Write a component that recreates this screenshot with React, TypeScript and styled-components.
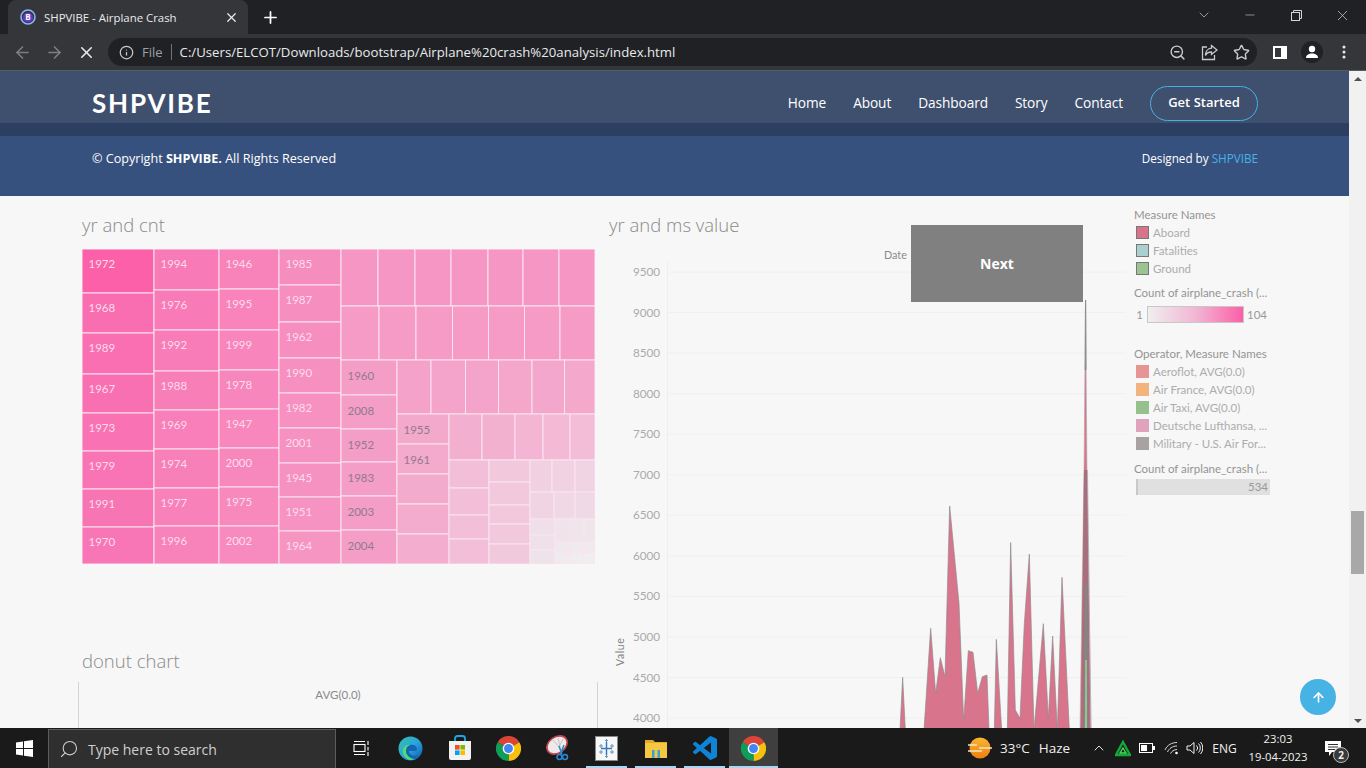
import React from 'react';
import styled, { createGlobalStyle } from 'styled-components';
import { ArrowLeft, ArrowRight, X, Info, ZoomOut, Star, Plus, ChevronDown, Minus, Search, ChevronUp, ArrowUp } from 'lucide-react';

const Global = createGlobalStyle`
  html, body { margin: 0; padding: 0; height: 100%; overflow: hidden; background: #f7f7f7; }
  #root { height: 100%; }
  * { box-sizing: border-box; }
`;

const UI = `"Open Sans", "Noto Sans", "Liberation Sans", sans-serif`;
const VIZ = `Lato, "Open Sans", "Liberation Sans", sans-serif`;

const Shell = styled.div`
  width: 1366px; height: 768px; display: flex; flex-direction: column; overflow: hidden; font-family: ${UI};
`;
const TabStrip = styled.div`
  height: 34px; background: #202124; display: flex; align-items: flex-end; padding-left: 8px; flex: none; color: #e8eaed;
`;
const Tab = styled.div`
  width: 240px; height: 34px; background: #35363a; border-radius: 8px 8px 0 0; display: flex; align-items: center; padding: 0 9px 0 12px; font-size: 11.4px; color: #e8eaed;
`;
const TabTitle = styled.span`
  margin-left: 8px; flex: 1; white-space: nowrap;
`;
const NewTab = styled.div`
  margin-left: 13px; height: 34px; display: flex; align-items: center;
`;
const WindowControls = styled.div`
  margin-left: auto; height: 30px; align-self: flex-start; display: flex; align-items: center; color: #d4d6d9;
`;
const WinBtn = styled.div<{ $w: number }>`
  width: ${p => p.$w}px; display: flex; justify-content: center;
`;
const Toolbar = styled.div`
  height: 36px; flex: none; background: #35363a; display: flex; align-items: center; padding-left: 6px; color: #c8cacd;
`;
const NavBtn = styled.div<{ $dim?: boolean }>`
  width: 32px; display: flex; justify-content: center; color: ${p => (p.$dim ? '#7d7f83' : '#e8eaed')};
`;
const Omnibox = styled.div`
  margin-left: 6px; width: 1149px; height: 28px; background: #202124; border-radius: 14px; display: flex; align-items: center; padding-left: 11px; font-size: 14px;
`;
const FileLabel = styled.span`
  color: #9aa0a6; font-size: 13px; margin-left: 8px;
`;
const Sep = styled.span`
  width: 1px; height: 16px; background: #70737a; margin: 0 8px;
`;
const Url = styled.span`
  color: #e8eaed; font-size: 13.2px; white-space: nowrap; flex: 1;
`;
const OmniIcon = styled.div`
  width: 32px; display: flex; justify-content: center; color: #c8cacd;
`;
const ToolRight = styled.div`
  display: flex; align-items: center; margin-left: 7px; color: #fff;
`;
const ToolSlot = styled.div`
  width: 32px; display: flex; justify-content: center;
`;
const Avatar = styled.div`
  width: 22px; height: 22px; border-radius: 50%; background: #202124; display: flex; align-items: center; justify-content: center;
`;
const Viewport = styled.div`
  flex: 1; min-height: 0; display: flex; border-top: 1px solid #5a5b5e; position: relative;
`;
const Page = styled.div`
  width: 1349px; background: #f7f7f7; display: flex; flex-direction: column; overflow: hidden;
`;
const Header = styled.header`
  height: 52px; flex: none; background: #3f4f6e; padding: 13px 91px 0 92px; display: flex; align-items: center; justify-content: space-between;
`;
const Logo = styled.div`
  font-family: Lato, "Open Sans", sans-serif; font-size: 26px; font-weight: 700; letter-spacing: 1.8px; color: #fff; padding-bottom: 2px;
`;
const Nav = styled.nav`
  display: flex; align-items: center; color: #fff; font-size: 13.7px; font-weight: 500;
`;
const NavLink = styled.span`
  margin-right: 27px; letter-spacing: -0.1px; padding-bottom: 2px;
`;
const CTA = styled.span`
  width: 108px; height: 35px; border: 1.5px solid #47b2e4; border-radius: 18px; display: flex; align-items: center; justify-content: center; font-size: 13px; font-weight: 600; color: #fff; padding-bottom: 3px;
`;
const Strip = styled.div`
  height: 13px; flex: none; background: #2c3e61;
`;
const Footer = styled.footer`
  height: 60px; flex: none; background: #37517e; padding: 14px 91px 0 92px; display: flex; justify-content: space-between; color: #fff; font-size: 12.6px;
  a { color: #47b2e4; }
`;
const Designed = styled.div`
  font-size: 11.7px;
`;
const Dashboard = styled.main`
  flex: 1; min-height: 0; display: flex; padding-left: 78px; align-items: flex-start;
`;
const LeftCol = styled.section`
  width: 520px; flex: none; padding-top: 17px;
`;
const RightCol = styled.section`
  width: 517px; flex: none; margin-left: 11px; padding-top: 17px; position: relative;
`;
const SheetTitle = styled.h2`
  margin: 0; font-family: ${UI}; font-weight: 300; font-size: 18.5px; line-height: 24px; height: 24px; color: #8a8a8a; white-space: nowrap;
`;
const LeftTitle = styled(SheetTitle)`
  padding-left: 4px;
`;
const TreeSvg = styled.svg`
  display: block; margin: 12px 0 0 4px;
`;
const DonutTitle = styled(LeftTitle)`
  margin-top: 85px;
`;
const DonutFrame = styled.div`
  margin-top: 9px; height: 60px; border-left: 1px solid #d4d4d4; border-right: 1px solid #d4d4d4; text-align: center; padding-top: 5px; font-family: ${VIZ}; font-size: 11.5px; color: #888; line-height: 16px;
`;
const ChartSvg = styled.svg`
  display: block; margin-top: 3px;
  text { font-family: ${VIZ}; }
`;
const NextButton = styled.div`
  position: absolute; left: 302px; top: 29px; width: 172px; height: 77px; background: #808080; color: #fff; font-family: ${UI}; font-weight: 700; font-size: 14px; display: flex; align-items: center; justify-content: center;
`;
const Legends = styled.aside`
  width: 136px; margin-left: 8px; padding-top: 12px; font-family: ${VIZ}; font-size: 11.5px; color: #949494; flex: none;
`;
const LegendTitle = styled.div<{ $mt?: number }>`
  height: 14px; line-height: 14px; margin-top: ${p => p.$mt ?? 0}px; margin-bottom: 1px; white-space: nowrap; overflow: hidden;
`;
const LegendRow = styled.div`
  height: 18px; display: flex; align-items: center; padding-left: 2px; color: #acacac; white-space: nowrap; overflow: hidden;
`;
const Swatch = styled.span<{ $c: string; $b?: boolean }>`
  width: 13px; height: 13px; margin-right: 4px; background: ${p => p.$c}; flex: none; border: ${p => (p.$b ? '1px solid #777' : 'none')};
`;
const ScaleRow = styled.div`
  display: flex; align-items: center; height: 17px; margin-top: 6px; color: #999;
`;
const ScaleMin = styled.span`
  width: 9px; text-align: right; margin-right: 4px;
`;
const ScaleBar = styled.span`
  width: 97px; height: 17px; margin: 0 3px 0 0; border: 1px solid #c8c8c8; background: linear-gradient(90deg, #f0eeee, #f2b6d4 50%, #fb5fa8);
`;
const SumBar = styled.div`
  margin-top: 3px; margin-left: 2px; width: 134px; height: 16px; background: #e0e0e0; border-left: 2px solid #c8c8c8; text-align: right; padding-right: 2px; color: #999; font-size: 11.5px; line-height: 16px;
`;
const Scrollbar = styled.div`
  width: 17px; flex: none; background: #f1f1f1; position: relative; display: flex; flex-direction: column; align-items: center; justify-content: space-between; padding: 6px 0 5px;
`;
const ScrollThumb = styled.div`
  position: absolute; left: 2px; top: 440px; width: 13px; height: 63px; background: #a8a8a8;
`;
const Arrow = styled.span<{ $down?: boolean }>`
  width: 0; height: 0; border-left: 4px solid transparent; border-right: 4px solid transparent;
  ${p => (p.$down ? 'border-top: 4px solid #505050;' : 'border-bottom: 4px solid #505050;')}
`;
const BackTop = styled.div`
  position: absolute; left: 1300px; top: 608px; width: 36px; height: 36px; border-radius: 50%; background: #47b2e4; color: #fff; display: flex; align-items: center; justify-content: center;
`;
const Taskbar = styled.div`
  height: 40px; flex: none; background: #1a1a1a; display: flex; align-items: center; color: #fff; position: relative;
`;
const StartBtn = styled.div`
  width: 48px; display: flex; justify-content: center;
`;
const SearchBox = styled.div`
  width: 288px; height: 39px; margin-top: 1px; background: #2f2f2f; border: 1px solid #5c5c5c; border-bottom: none; display: flex; align-items: center; padding-left: 10px; color: #cfcfcf; font-size: 14px;
  span { margin-left: 9px; }
`;
const TaskSlot = styled.div<{ $w?: number; $open?: boolean; $active?: boolean }>`
  width: ${p => p.$w ?? 49}px; height: 40px; display: flex; align-items: center; justify-content: center; position: relative; background: ${p => (p.$active ? '#3f3f3f' : 'transparent')};
  ${p => (p.$open ? `&::after { content: ''; position: absolute; bottom: 0; left: ${p.$active ? 0 : 4}px; right: ${p.$active ? 0 : 4}px; height: 2px; background: #a6d8f5; }` : '')}
`;
const Tray = styled.div`
  margin-left: auto; margin-right: 11px; display: flex; align-items: center; height: 40px; font-size: 12px; color: #f0f0f0;
`;
const Weather = styled.div`
  display: flex; align-items: center; width: 118px; font-size: 13.5px;
  span:first-of-type { margin-left: 8px; }
  span:last-of-type { margin-left: 9px; }
`;
const TraySlot = styled.div<{ $w: number }>`
  width: ${p => p.$w}px; display: flex; justify-content: center; align-items: center;
`;
const Clock = styled.div`
  width: 66px; text-align: center; font-size: 11.3px; line-height: 18px; white-space: nowrap;
`;
const Notify = styled.div`
  width: 44px; height: 40px; position: relative; display: flex; align-items: center; justify-content: center;
`;
const NotifyBadge = styled.span`
  position: absolute; left: 22px; top: 19px; width: 16px; height: 16px; border-radius: 50%; background: #3a3a3a; border: 1px solid #bbb; font-size: 10px; font-weight: 700; display: flex; align-items: center; justify-content: center; line-height: 1;
`;

/* ---------- treemap data (page coordinates) ---------- */
type Cell = { x: number; y: number; w: number; h: number; c: string; t?: string; dark?: boolean };
const cells: Cell[] = [];
const col = (x0: number, x1: number, ys: number[], c: string | string[], labels: string[] = [], dark = false) => {
  for (let i = 0; i < ys.length - 1; i++) {
    cells.push({ x: x0, y: ys[i], w: x1 - x0, h: ys[i + 1] - ys[i], c: Array.isArray(c) ? c[i] : c, t: labels[i], dark });
  }
};
const row = (y0: number, y1: number, xs: number[], c: string | string[]) => {
  for (let i = 0; i < xs.length - 1; i++) {
    cells.push({ x: xs[i], y: y0, w: xs[i + 1] - xs[i], h: y1 - y0, c: Array.isArray(c) ? c[i] : c });
  }
};
col(82, 154, [249, 293, 333, 374, 413, 451, 489, 527, 564], ['#fb60a9', '#f96eb0', '#f96fb1', '#f970b2', '#f972b3', '#f974b4', '#f875b4', '#f876b5'], ['1972', '1968', '1989', '1967', '1973', '1979', '1991', '1970']);
col(154, 219, [249, 290, 330, 371, 410, 449, 488, 526, 564], ['#f87ab6', '#f87bb7', '#f87cb7', '#f87eb8', '#f87fb9', '#f880b9', '#f881ba', '#f882ba'], ['1994', '1976', '1992', '1988', '1969', '1974', '1977', '1996']);
col(219, 279, [249, 289, 330, 370, 409, 448, 487, 526, 564], ['#f883bb', '#f884bb', '#f885bc', '#f786bc', '#f787bd', '#f788bd', '#f789bd', '#f78abe'], ['1946', '1995', '1999', '1978', '1947', '2000', '1975', '2002']);
col(279, 341, [249, 285, 322, 358, 393, 428, 463, 497, 531, 564], ['#f68dbf', '#f68ec0', '#f68fc0', '#f690c0', '#f691c1', '#f692c1', '#f692c2', '#f693c2', '#f694c2'], ['1985', '1987', '1962', '1990', '1982', '2001', '1945', '1951', '1964']);
row(249, 306, [341, 378, 415, 451, 488, 523, 559, 595], '#f696c4');
row(306, 360, [341, 379, 416, 452.5, 488.5, 524.5, 560, 595], '#f59bc6');
col(341, 397, [360, 395, 429, 462, 496, 530, 564], '#f49ec7', ['1960', '2008', '1952', '1983', '2003', '2004'], true);
row(360, 414, [397, 431, 465.5, 498.5, 532, 564.5, 595], ['#f4a2ca', '#f4a3ca', '#f4a4cb', '#f4a6cb', '#f4a7cc', '#f4a8cc']);
col(397, 449, [414, 444, 474, 504, 534, 564], ['#f3a9cc', '#f3aacd', '#f3abcd', '#f3accd', '#f3adce'], ['1955', '1961'], true);
row(414, 460, [449, 482, 515, 543, 570, 595], ['#f3afcf', '#f3b1d0', '#f3b5d3', '#f3b9d5', '#f3bdd7']);
col(449, 489, [460, 488, 515, 539, 564], '#f3bfd8');
col(489, 530, [460, 482, 505, 524, 544, 564], '#f2c8dc');
row(460, 492, [530, 552, 575, 595], ['#f1d0e1', '#f1d2e2', '#f0d4e3']);
row(492, 519, [530, 554, 575, 595], ['#f1d4e3', '#f0d8e5', '#f0d9e6']);
col(530, 555, [519, 535, 550, 564], ['#efdfe8', '#efe1e9', '#efe3ea']);
row(519, 542, [555, 570, 584, 595], ['#efe4ea', '#efe5eb', '#efe6eb']);
row(542, 553, [555, 570, 584, 595], ['#efe8ec', '#f0e9ed', '#f0eaed']);
row(553, 564, [555, 570, 584, 595], ['#f0ecee', '#f0edef', '#f1eeef']);

const Treemap = () => (
  <TreeSvg width={513} height={315} viewBox="82 249 513 315">
    {cells.map((c, i) => (
      <g key={i}>
        <rect x={c.x} y={c.y} width={c.w} height={c.h} fill={c.c} stroke="#fbe3ef" strokeWidth={1} />
        {c.t && (
          <text x={c.x + 6.5} y={c.y + (c.dark ? 19.5 : 18.7)} fontFamily={VIZ} fontSize={11.5} fill={c.dark ? '#927a8c' : '#ffdcec'}>
            {c.t}
          </text>
        )}
      </g>
    ))}
  </TreeSvg>
);

/* ---------- area chart ---------- */
const z = (pts: number[][]) => pts.map(([x, y]) => `${880 + x / 3},${480 + y / 3}`).join(' ');
const areas = [
  [[60, 750], [68, 592], [76, 750]],
  [[132, 750], [152, 445], [167, 640], [181, 533], [195, 590], [209, 78], [237, 370], [251, 722], [265, 512], [279, 517], [293, 640], [307, 590], [321, 585], [327, 750]],
  [[343, 750], [349, 478], [365, 750]],
  [[382, 750], [392, 188], [406, 690], [420, 715], [433, 430], [448, 222], [462, 750]],
  [[462, 750], [490, 431], [505, 715], [518, 468], [532, 750]],
  [[532, 750], [546, 292], [568, 750]],
];
const ticks = [9500, 9000, 8500, 8000, 7500, 7000, 6500, 6000, 5500, 5000, 4500, 4000];

const AreaChart = () => (
  <ChartSvg width={517} height={488} viewBox="609 240 517 488">
    <line x1={667.5} y1={262} x2={667.5} y2={728} stroke="#efefef" />
    {ticks.map((t, i) => {
      const y = 272 + i * 40.55;
      return (
        <g key={t}>
          <line x1={668} x2={1126} y1={y} y2={y} stroke="#f0f0f0" />
          <text x={660} y={y + 4} textAnchor="end" fontSize={11.7} fill="#aaaaaa">{t}</text>
        </g>
      );
    })}
    <text x={884} y={259} fontSize={10.8} fill="#8a8a8a">Date</text>
    <text transform="translate(624 666) rotate(-90)" fontSize={10.5} letterSpacing={0.6} fill="#808080">Value</text>
    {areas.map((a, i) => (
      <polygon key={i} points={z(a)} fill="#d8748b" stroke="#8c8c8c" strokeWidth={0.9} strokeOpacity={0.75} />
    ))}
    <polygon points="1085.5,300 1087,470 1091,728 1080,728 1084,470" fill="#d8748b" stroke="#b0b0b0" strokeWidth={0.6} />
    <polygon points="1085,300 1086.2,300 1086.5,370 1084.7,370" fill="#8f8f8f" />
    <polygon points="1084,470 1087.5,470 1090,728 1081,728" fill="#a86f7f" />
    <polygon points="1085,585 1087,585 1088,728 1084,728" fill="#7d8a7f" />
    <polygon points="1085.2,660 1086.8,660 1087,728 1085,728" fill="#9cc493" />
    <line x1={1087.5} y1={470} x2={1091} y2={728} stroke="#b5b5b5" strokeWidth={0.8} />
  </ChartSvg>
);

/* ---------- small drawn icons ---------- */
const Favicon = () => (
  <svg width="16" height="16" viewBox="0 0 16 16">
    <circle cx="8" cy="8" r="7" fill="none" stroke="#8ab4f8" strokeWidth="1.6" />
    <circle cx="8" cy="8.5" r="5" fill="#5f3dc4" />
    <text x="8" y="11.3" textAnchor="middle" fontSize="8" fontWeight="700" fontFamily="Open Sans, sans-serif" fill="#fff">B</text>
  </svg>
);
const Restore = () => (
  <svg width="11" height="11" viewBox="0 0 11 11" fill="none" stroke="currentColor">
    <rect x="0.5" y="2.5" width="8" height="8" />
    <path d="M2.5 2.5V.5h8v8H8.5" />
  </svg>
);
const Share = () => (
  <svg width="17" height="17" viewBox="0 0 17 17" fill="none" stroke="currentColor" strokeWidth="1.3">
    <path d="M6 3H1.5v12.5h12V11" />
    <path d="M10.5 1.5L16 6l-5.5 4.5V8C7.5 8 5.5 9 4.5 11.5 4.5 8 6.5 4.5 10.5 4.2z" />
  </svg>
);
const SidePanel = () => (
  <svg width="14" height="13" viewBox="0 0 14 13">
    <rect x="0.5" y="0.5" width="13" height="12" fill="none" stroke="#fff" />
    <rect x="8" y="0" width="6" height="13" fill="#fff" />
    <rect x="0" y="0" width="2" height="13" fill="#fff" />
    <rect x="0" y="0" width="14" height="2" fill="#fff" />
    <rect x="0" y="11" width="14" height="2" fill="#fff" />
  </svg>
);
const Person = () => (
  <svg width="14" height="14" viewBox="0 0 14 14" fill="#fff">
    <circle cx="7" cy="4" r="3.2" />
    <path d="M1 13c0-3 2.6-4.5 6-4.5s6 1.5 6 4.5z" />
  </svg>
);
const Dots = () => (
  <svg width="4" height="14" viewBox="0 0 4 14" fill="#e8eaed">
    <circle cx="2" cy="2" r="1.5" />
    <circle cx="2" cy="7" r="1.5" />
    <circle cx="2" cy="12" r="1.5" />
  </svg>
);
const WinLogo = () => (
  <svg width="17" height="17" viewBox="0 0 17 17" fill="#fff">
    <path d="M0 2.4L7 1.4v6.6H0zM8 1.3L17 0v8H8zM0 9h7v6.6L0 14.6zM8 9h9v8l-9-1.3z" />
  </svg>
);
const TaskView = () => (
  <svg width="17" height="17" viewBox="0 0 17 17" fill="none" stroke="#fff" strokeWidth="1.1">
    <rect x="1" y="4.5" width="11" height="7" />
    <path d="M1 1.5h11M1 14.5h11M15 1v4M15 7v3.5M15 12v4" />
  </svg>
);
const Edge = () => (
  <svg width="25" height="25" viewBox="0 0 25 25">
    <defs>
      <linearGradient id="eg" x1="0" y1="0" x2="1" y2="1">
        <stop offset="0" stopColor="#36c0a8" />
        <stop offset="0.5" stopColor="#2aa6de" />
        <stop offset="1" stopColor="#0c59a4" />
      </linearGradient>
    </defs>
    <circle cx="12.5" cy="12.5" r="12" fill="url(#eg)" />
    <path d="M12 9c4-1 7 1 7 4 0 1-1 2-2.500 2H11c0 4 5 6 10 4-2 3-5 5.500-9 5-4.500-.5-7-5-6-9 .6-3 3-5.500 6-6z" fill="#1565b7" />
    <path d="M5 17c-1-5 3-9 7-8-3 1-4 3-4 6 0 4 4 8 9 8-6 3-11-1-12-6z" fill="#4fdc74" />
  </svg>
);
const Store = () => (
  <svg width="24" height="26" viewBox="0 0 24 26">
    <path d="M7 6V3.500C7 2 8 1 9.500 1h5C16 1 17 2 17 3.500V6" fill="none" stroke="#1ba6e8" strokeWidth="1.8" />
    <path d="M1 6h22v17a2 2 0 0 1-2 2H3a2 2 0 0 1-2-2z" fill="#f2f2f2" />
    <rect x="7" y="10" width="4.600" height="4.600" fill="#f25022" />
    <rect x="12.400" y="10" width="4.600" height="4.600" fill="#7fba00" />
    <rect x="7" y="15.400" width="4.600" height="4.600" fill="#00a4ef" />
    <rect x="12.400" y="15.400" width="4.600" height="4.600" fill="#ffb900" />
  </svg>
);
const Chrome = () => (
  <svg width="25" height="25" viewBox="0 0 24 24">
    <path d="M12 12L1.600 6A12 12 0 0 1 22.400 6z" fill="#db4437" />
    <path d="M12 12L22.400 6A12 12 0 0 1 12 24z" fill="#f4c20d" />
    <path d="M12 12L12 24A12 12 0 0 1 1.600 6z" fill="#0f9d58" />
    <circle cx="12" cy="12" r="5.600" fill="#fff" />
    <circle cx="12" cy="12" r="4.300" fill="#4285f4" />
  </svg>
);
const Snip = () => (
  <svg width="26" height="26" viewBox="0 0 26 26">
    <ellipse cx="12" cy="10" rx="11" ry="8" transform="rotate(-35 12 10)" fill="#efe9e9" stroke="#c0474f" strokeWidth="1.6" />
    <path d="M13 3l2 9M18 4l-4 8M8 5l6 7" stroke="#b9b9b9" strokeWidth="0.8" />
    <path d="M14 11l3 8M19 10l-3.500 9" stroke="#2b8ad6" strokeWidth="1.600" />
    <circle cx="14.500" cy="22" r="2.500" fill="none" stroke="#2b8ad6" strokeWidth="1.500" />
    <circle cx="20" cy="22" r="2.500" fill="none" stroke="#2b8ad6" strokeWidth="1.500" />
  </svg>
);
const TableauTile = () => (
  <svg width="23" height="25" viewBox="0 0 23 25">
    <rect x="0.500" y="0.500" width="22" height="24" fill="#f7f7f7" stroke="#888" />
    <path d="M11.500 6v13M6 12.500h11" stroke="#3b78b5" strokeWidth="1.500" />
    <path d="M6 8v4M4 10h4M17 8v4M15 10h4M6 14v4M4 16h4M17 14v4M15 16h4M11.500 3v3M10 4.500h3M11.500 19v3M10 20.500h3" stroke="#5e97c9" strokeWidth="1" />
  </svg>
);
const Folder = () => (
  <svg width="24" height="22" viewBox="0 0 24 22">
    <path d="M1 3h8l2 2h12v3H1z" fill="#e2a82a" />
    <rect x="1" y="6" width="22" height="15" fill="#f5c842" />
    <rect x="8" y="13" width="8" height="8" fill="#3b9fdc" />
    <rect x="10.500" y="13" width="3" height="8" fill="#f5c842" />
  </svg>
);
const VSCode = () => (
  <svg width="24" height="24" viewBox="0 0 24 24">
    <path fill="#0f84d6" d="M23.150 2.587L18.210.210a1.494 1.494 0 0 0-1.705.290l-9.460 8.630-4.120-3.128a.999.999 0 0 0-1.276.057L.327 7.261A1 1 0 0 0 .326 8.740L3.899 12 .326 15.260a1 1 0 0 0 .001 1.479L1.650 17.940a.999.999 0 0 0 1.276.057l4.120-3.128 9.460 8.630a1.492 1.492 0 0 0 1.704.290l4.942-2.377A1.500 1.500 0 0 0 24 20.060V3.939a1.500 1.500 0 0 0-.850-1.352zm-5.146 14.861L10.826 12l7.178-5.448v10.896z" />
  </svg>
);
const Sun = () => (
  <svg width="24" height="22" viewBox="0 0 24 22">
    <defs>
      <linearGradient id="sg" x1="0" y1="0" x2="0" y2="1">
        <stop offset="0" stopColor="#f7b733" />
        <stop offset="1" stopColor="#ef7d12" />
      </linearGradient>
    </defs>
    <circle cx="12" cy="11" r="10.500" fill="url(#sg)" />
    <path d="M0 8h9M11 11h13M0 14h14" stroke="#f3e3c0" strokeWidth="1.600" />
  </svg>
);
const TrayTriangle = () => (
  <svg width="16" height="17" viewBox="0 0 16 17" fill="none" stroke="#12a83c" strokeWidth="2.400">
    <path d="M8 2L15 15H1z" />
    <path d="M8 8l3 5H5z" stroke="#4ade5a" strokeWidth="1.400" />
  </svg>
);
const Battery = () => (
  <svg width="16" height="10" viewBox="0 0 16 10">
    <rect x="0.500" y="0.500" width="13" height="9" fill="none" stroke="#fff" />
    <rect x="2" y="2" width="6" height="6" fill="#fff" />
    <rect x="14" y="3" width="2" height="4" fill="#fff" />
  </svg>
);
const Wifi = () => (
  <svg width="16" height="14" viewBox="0 0 16 14" fill="none" stroke="#d8d8d8" strokeWidth="1">
    <path d="M1 9C3 4 8 1.500 13 1.500M3.500 11C5 7.500 8.500 5 13 5M6.500 12.500C7.500 10.500 10 8.500 13 8.500" />
    <circle cx="12.500" cy="12" r="1.300" fill="#fff" stroke="none" />
  </svg>
);
const Speaker = () => (
  <svg width="17" height="14" viewBox="0 0 17 14" fill="none" stroke="#f0f0f0" strokeWidth="1">
    <path d="M1 5h3l4-3.500v11L4 9H1z" />
    <path d="M10.500 4.500a3.500 3.500 0 0 1 0 5M12.500 2.500a6.500 6.500 0 0 1 0 9M14.500 1a9 9 0 0 1 0 12" />
  </svg>
);
const Bubble = () => (
  <svg width="18" height="17" viewBox="0 0 18 17" fill="#fff">
    <path d="M1 1h16v11H8l-3 4v-4H1z" />
    <path d="M4 4.500h10M4 7h10M4 9.500h7" stroke="#1a1a1a" strokeWidth="0.900" />
  </svg>
);

export default function App() {
  return (
    <Shell>
      <Global />
      <TabStrip>
        <Tab>
          <Favicon />
          <TabTitle>SHPVIBE - Airplane Crash</TabTitle>
          <X size={15} strokeWidth={2} />
        </Tab>
        <NewTab><Plus size={19} strokeWidth={2.2} color="#fff" /></NewTab>
        <WindowControls>
          <WinBtn $w={46}><ChevronDown size={16} strokeWidth={1} /></WinBtn>
          <WinBtn $w={46}><Minus size={14} strokeWidth={1} /></WinBtn>
          <WinBtn $w={46}><Restore /></WinBtn>
          <WinBtn $w={47}><X size={17} strokeWidth={1} /></WinBtn>
        </WindowControls>
      </TabStrip>
      <Toolbar>
        <NavBtn $dim><ArrowLeft size={19} /></NavBtn>
        <NavBtn $dim><ArrowRight size={19} /></NavBtn>
        <NavBtn><X size={19} /></NavBtn>
        <Omnibox>
          <Info size={15} color="#c8cacd" />
          <FileLabel>File</FileLabel>
          <Sep />
          <Url>C:/Users/ELCOT/Downloads/bootstrap/Airplane%20crash%20analysis/index.html</Url>
          <OmniIcon><ZoomOut size={17} /></OmniIcon>
          <OmniIcon><Share /></OmniIcon>
          <OmniIcon><Star size={17} strokeWidth={2} /></OmniIcon>
        </Omnibox>
        <ToolRight>
          <ToolSlot><SidePanel /></ToolSlot>
          <ToolSlot><Avatar><Person /></Avatar></ToolSlot>
          <ToolSlot><Dots /></ToolSlot>
        </ToolRight>
      </Toolbar>
      <Viewport>
        <Page>
          <Header>
            <Logo>SHPVIBE</Logo>
            <Nav>
              <NavLink>Home</NavLink>
              <NavLink>About</NavLink>
              <NavLink>Dashboard</NavLink>
              <NavLink>Story</NavLink>
              <NavLink>Contact</NavLink>
              <CTA>Get Started</CTA>
            </Nav>
          </Header>
          <Strip />
          <Footer>
            <div>© Copyright <strong>SHPVIBE.</strong> All Rights Reserved</div>
            <Designed>Designed by <a>SHPVIBE</a></Designed>
          </Footer>
          <Dashboard>
            <LeftCol>
              <LeftTitle>yr and cnt</LeftTitle>
              <Treemap />
              <DonutTitle>donut chart</DonutTitle>
              <DonutFrame>AVG(0.0)</DonutFrame>
            </LeftCol>
            <RightCol>
              <SheetTitle>yr and ms value</SheetTitle>
              <AreaChart />
              <NextButton>Next</NextButton>
            </RightCol>
            <Legends>
              <LegendTitle>Measure Names</LegendTitle>
              <LegendRow><Swatch $c="#d9738b" $b />Aboard</LegendRow>
              <LegendRow><Swatch $c="#a9cfcf" $b />Fatalities</LegendRow>
              <LegendRow><Swatch $c="#9cc493" $b />Ground</LegendRow>
              <LegendTitle $mt={9}>Count of airplane_crash (...</LegendTitle>
              <ScaleRow><ScaleMin>1</ScaleMin><ScaleBar />104</ScaleRow>
              <LegendTitle $mt={24}>Operator, Measure Names</LegendTitle>
              <LegendRow><Swatch $c="#e79494" />Aeroflot, AVG(0.0)</LegendRow>
              <LegendRow><Swatch $c="#f2b47c" />Air France, AVG(0.0)</LegendRow>
              <LegendRow><Swatch $c="#96c08c" />Air Taxi, AVG(0.0)</LegendRow>
              <LegendRow><Swatch $c="#dfa3bc" />Deutsche Lufthansa, ...</LegendRow>
              <LegendRow><Swatch $c="#a9a2a2" />Military - U.S. Air For...</LegendRow>
              <LegendTitle $mt={10}>Count of airplane_crash (...</LegendTitle>
              <SumBar>534</SumBar>
            </Legends>
          </Dashboard>
        </Page>
        <Scrollbar>
          <Arrow />
          <ScrollThumb />
          <Arrow $down />
        </Scrollbar>
        <BackTop><ArrowUp size={15} strokeWidth={2.6} /></BackTop>
      </Viewport>
      <Taskbar>
        <StartBtn><WinLogo /></StartBtn>
        <SearchBox>
          <Search size={20} strokeWidth={1.3} style={{ transform: 'scaleX(-1)' }} />
          <span>Type here to search</span>
        </SearchBox>
        <TaskSlot $w={50}><TaskView /></TaskSlot>
        <TaskSlot><Edge /></TaskSlot>
        <TaskSlot><Store /></TaskSlot>
        <TaskSlot><Chrome /></TaskSlot>
        <TaskSlot><Snip /></TaskSlot>
        <TaskSlot $open><TableauTile /></TaskSlot>
        <TaskSlot $open><Folder /></TaskSlot>
        <TaskSlot $open><VSCode /></TaskSlot>
        <TaskSlot $open $active><Chrome /></TaskSlot>
        <Tray>
          <Weather>
            <Sun />
            <span>33°C</span>
            <span>Haze</span>
          </Weather>
          <TraySlot $w={26}><ChevronUp size={16} strokeWidth={1.4} /></TraySlot>
          <TraySlot $w={22}><TrayTriangle /></TraySlot>
          <TraySlot $w={26}><Battery /></TraySlot>
          <TraySlot $w={24}><Wifi /></TraySlot>
          <TraySlot $w={20}><Speaker /></TraySlot>
          <TraySlot $w={41}>ENG</TraySlot>
          <Clock><div>23:03</div><div>19-04-2023</div></Clock>
          <Notify><Bubble /><NotifyBadge>2</NotifyBadge></Notify>
        </Tray>
      </Taskbar>
    </Shell>
  );
}
